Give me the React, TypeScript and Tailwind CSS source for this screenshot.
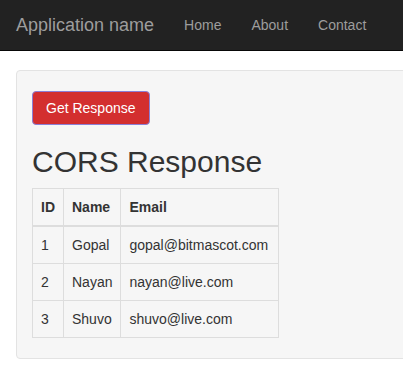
import React from "react";

const rows = [
  { id: 1, name: "Gopal", email: "gopal@bitmascot.com" },
  { id: 2, name: "Nayan", email: "nayan@live.com" },
  { id: 3, name: "Shuvo", email: "shuvo@live.com" },
];

export default function App() {
  return (
    <div
      className="w-[403px] h-[382px] overflow-hidden bg-white text-[14px] text-[#333]"
      style={{ fontFamily: '"Liberation Sans", Arial, sans-serif' }}
    >
      <nav className="h-[51px] bg-[#222] border-b border-[#080808] flex items-center">
        <span className="pl-[16px] pr-[15px] text-[18px] leading-[20px] text-[#9d9d9d]">Application name</span>
        <span className="px-[15px] leading-[20px] text-[#9d9d9d]">Home</span>
        <span className="px-[15px] leading-[20px] text-[#9d9d9d]">About</span>
        <span className="px-[15px] leading-[20px] text-[#9d9d9d]">Contact</span>
      </nav>
      <div className="pl-[16px] pt-[19px]">
        <div className="w-[420px] bg-[#f6f6f6] border border-[#e3e3e3] rounded-[4px] pl-[15px] pt-[20px] pb-[20px]">
          <button className="h-[34px] px-[13px] bg-[#d32f2f] border border-[#8b7fd6] rounded-[4px] text-white text-[14px] leading-[20px]">
            Get Response
          </button>
          <h2 className="mt-[20px] mb-[10px] text-[30px] leading-[33px] font-normal text-[#333]">CORS Response</h2>
          <table className="border-collapse border border-[#ddd]">
            <thead>
              <tr>
                <th className="border border-[#ddd] border-b-2 px-[8px] py-[8px] text-left font-bold leading-[20px]">ID</th>
                <th className="border border-[#ddd] border-b-2 px-[8px] py-[8px] text-left font-bold leading-[20px]">Name</th>
                <th className="border border-[#ddd] border-b-2 pl-[8px] pr-[10px] py-[8px] text-left font-bold leading-[20px]">Email</th>
              </tr>
            </thead>
            <tbody>
              {rows.map((r) => (
                <tr key={r.id}>
                  <td className="border border-[#ddd] px-[8px] py-[8px] leading-[20px]">{r.id}</td>
                  <td className="border border-[#ddd] px-[8px] py-[8px] leading-[20px]">{r.name}</td>
                  <td className="border border-[#ddd] pl-[8px] pr-[10px] py-[8px] leading-[20px]">{r.email}</td>
                </tr>
              ))}
            </tbody>
          </table>
        </div>
      </div>
    </div>
  );
}
